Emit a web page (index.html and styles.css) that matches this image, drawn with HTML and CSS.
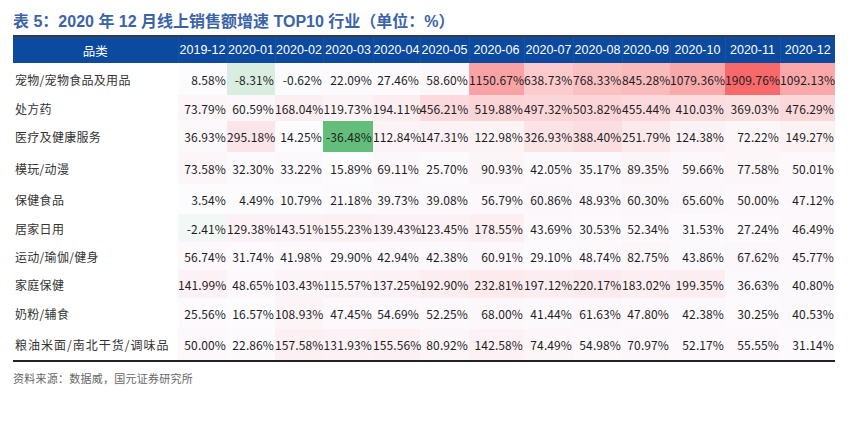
FILE: index.html
```html
<!DOCTYPE html>
<html lang="zh-CN">
<head>
<meta charset="utf-8">
<title>表 5</title>
<link rel="stylesheet" href="styles.css">
</head>
<body>
<div class="page">
  <h1 class="title">表 5：2020 年 12 月线上销售额增速 TOP10 行业（单位：%）</h1>
  <table class="heat">
    <colgroup>
      <col class="c-cat"><col class="c49"><col class="c48"><col class="c48"><col class="c50"><col class="c47"><col class="c49"><col class="c55"><col class="c49"><col class="c49"><col class="c48"><col class="c55"><col class="c55"><col class="c55">
    </colgroup>
    <thead>
      <tr><th>品类</th><th>2019-12</th><th>2020-01</th><th>2020-02</th><th>2020-03</th><th>2020-04</th><th>2020-05</th><th>2020-06</th><th>2020-07</th><th>2020-08</th><th>2020-09</th><th>2020-10</th><th>2020-11</th><th>2020-12</th></tr>
    </thead>
    <tbody>
      <tr class="h32"><td class="cat">宠物/宠物食品及用品</td><td class="num">8.58%</td><td class="num">-8.31%</td><td class="num">-0.62%</td><td class="num">22.09%</td><td class="num">27.46%</td><td class="num">58.60%</td><td class="num">1150.67%</td><td class="num">638.73%</td><td class="num">768.33%</td><td class="num">845.28%</td><td class="num">1079.36%</td><td class="num">1909.76%</td><td class="num">1092.13%</td></tr>
      <tr class="h26"><td class="cat">处方药</td><td class="num">73.79%</td><td class="num">60.59%</td><td class="num">168.04%</td><td class="num">119.73%</td><td class="num">194.11%</td><td class="num">456.21%</td><td class="num">519.88%</td><td class="num">497.32%</td><td class="num">503.82%</td><td class="num">455.44%</td><td class="num">410.03%</td><td class="num">369.03%</td><td class="num">476.29%</td></tr>
      <tr class="h31"><td class="cat">医疗及健康服务</td><td class="num">36.93%</td><td class="num">295.18%</td><td class="num">14.25%</td><td class="num">-36.48%</td><td class="num">112.84%</td><td class="num">147.31%</td><td class="num">122.98%</td><td class="num">326.93%</td><td class="num">388.40%</td><td class="num">251.79%</td><td class="num">124.38%</td><td class="num">72.22%</td><td class="num">149.27%</td></tr>
      <tr class="h32"><td class="cat">模玩/动漫</td><td class="num">73.58%</td><td class="num">32.30%</td><td class="num">33.22%</td><td class="num">15.89%</td><td class="num">69.11%</td><td class="num">25.70%</td><td class="num">90.93%</td><td class="num">42.05%</td><td class="num">35.17%</td><td class="num">89.35%</td><td class="num">59.66%</td><td class="num">77.58%</td><td class="num">50.01%</td></tr>
      <tr class="h30"><td class="cat">保健食品</td><td class="num">3.54%</td><td class="num">4.49%</td><td class="num">10.79%</td><td class="num">21.18%</td><td class="num">39.73%</td><td class="num">39.08%</td><td class="num">56.79%</td><td class="num">60.86%</td><td class="num">48.93%</td><td class="num">60.30%</td><td class="num">65.60%</td><td class="num">50.00%</td><td class="num">47.12%</td></tr>
      <tr class="h28"><td class="cat">居家日用</td><td class="num">-2.41%</td><td class="num">129.38%</td><td class="num">143.51%</td><td class="num">155.23%</td><td class="num">139.43%</td><td class="num">123.45%</td><td class="num">178.55%</td><td class="num">43.69%</td><td class="num">30.53%</td><td class="num">52.34%</td><td class="num">31.53%</td><td class="num">27.24%</td><td class="num">46.49%</td></tr>
      <tr class="h28"><td class="cat">运动/瑜伽/健身</td><td class="num">56.74%</td><td class="num">31.74%</td><td class="num">41.98%</td><td class="num">29.90%</td><td class="num">42.94%</td><td class="num">42.38%</td><td class="num">60.91%</td><td class="num">29.10%</td><td class="num">48.74%</td><td class="num">82.75%</td><td class="num">43.86%</td><td class="num">67.62%</td><td class="num">45.77%</td></tr>
      <tr class="h28"><td class="cat">家庭保健</td><td class="num">141.99%</td><td class="num">48.65%</td><td class="num">103.43%</td><td class="num">115.57%</td><td class="num">137.25%</td><td class="num">192.90%</td><td class="num">232.81%</td><td class="num">197.12%</td><td class="num">220.17%</td><td class="num">183.02%</td><td class="num">199.35%</td><td class="num">36.63%</td><td class="num">40.80%</td></tr>
      <tr class="h31"><td class="cat">奶粉/辅食</td><td class="num">25.56%</td><td class="num">16.57%</td><td class="num">108.93%</td><td class="num">47.45%</td><td class="num">54.69%</td><td class="num">52.25%</td><td class="num">68.00%</td><td class="num">41.44%</td><td class="num">61.63%</td><td class="num">47.80%</td><td class="num">42.38%</td><td class="num">30.25%</td><td class="num">40.53%</td></tr>
      <tr class="h31 last"><td class="cat wide">粮油米面/南北干货/调味品</td><td class="num">50.00%</td><td class="num">22.86%</td><td class="num">157.58%</td><td class="num">131.93%</td><td class="num">155.56%</td><td class="num">80.92%</td><td class="num">142.58%</td><td class="num">74.49%</td><td class="num">54.98%</td><td class="num">70.97%</td><td class="num">52.17%</td><td class="num">55.55%</td><td class="num">31.14%</td></tr>
    </tbody>
  </table>
  <p class="source">资料来源：数据威，国元证券研究所</p>
</div>
<script src="script.js"></script>
</body>
</html>
```

FILE: styles.css
```css
html, body {
  margin: 0;
  padding: 0;
  background: #ffffff;
}

.page {
  padding: 12px 13px 0 13px;
  font-family: "Noto Sans CJK SC", "Noto Sans", sans-serif;
}

.title {
  margin: 0 0 3px 0;
  font-size: 16px;
  line-height: 20px;
  font-weight: 700;
  color: #3b64a8;
  white-space: nowrap;
  font-family: "Liberation Sans", "Noto Sans CJK SC", sans-serif;
}

.heat {
  width: 822px;
  table-layout: fixed;
  border-collapse: collapse;
  border-top: 2px solid #3a3a3a;
}

.c-cat { width: 165px; }
.c47 { width: 47px; }
.c48 { width: 48px; }
.c49 { width: 49px; }
.c50 { width: 50px; }
.c55 { width: 55px; }

.heat th {
  height: 26px;
  padding: 0;
  background: #0b4a9e;
  color: #ffffff;
  font-weight: 400;
  font-size: 12.5px;
  text-align: center;
  white-space: nowrap;
  border-left: 1px solid #16549f;
  font-family: "Liberation Sans", "Noto Sans CJK SC", sans-serif;
}

.heat th:first-child {
  border-left: none;
}

.heat td {
  padding: 0;
  white-space: nowrap;
  color: #1e1e1e;
}

.heat .cat {
  padding-left: 2px;
  font-size: 12px;
  color: #333333;
  letter-spacing: 0.3px;
}

.heat .cat.wide {
  letter-spacing: 1px;
}

.heat .num {
  text-align: right;
  padding-right: 1px;
  font-size: 12px;
  letter-spacing: 0.1px;
}

.h26 td { height: 26px; }
.h28 td { height: 28px; }
.h30 td { height: 30px; }
.h31 td { height: 31px; }
.h32 td { height: 32px; }

.heat tr.last td {
  border-bottom: 2px solid #222222;
}

.source {
  margin: 8px 0 0 0;
  font-size: 11px;
  line-height: 16px;
  color: #666666;
  letter-spacing: 0.25px;
}
```

FILE: script.js
```js
(function () {
  var cells = document.querySelectorAll('.heat td.num');
  var vals = [];
  cells.forEach(function (c) { vals.push(parseFloat(c.textContent)); });
  var min = Math.min.apply(null, vals);
  var max = Math.max.apply(null, vals);
  var white = [252, 252, 255];
  var red = [248, 105, 107];
  var green = [99, 190, 123];
  function mix(a, b, t) {
    return 'rgb(' + a.map(function (v, i) { return Math.round(v + (b[i] - v) * t); }).join(',') + ')';
  }
  cells.forEach(function (c, i) {
    var v = vals[i];
    c.style.backgroundColor = v >= 0 ? mix(white, red, v / max) : mix(white, green, v / min);
  });
})();
```
